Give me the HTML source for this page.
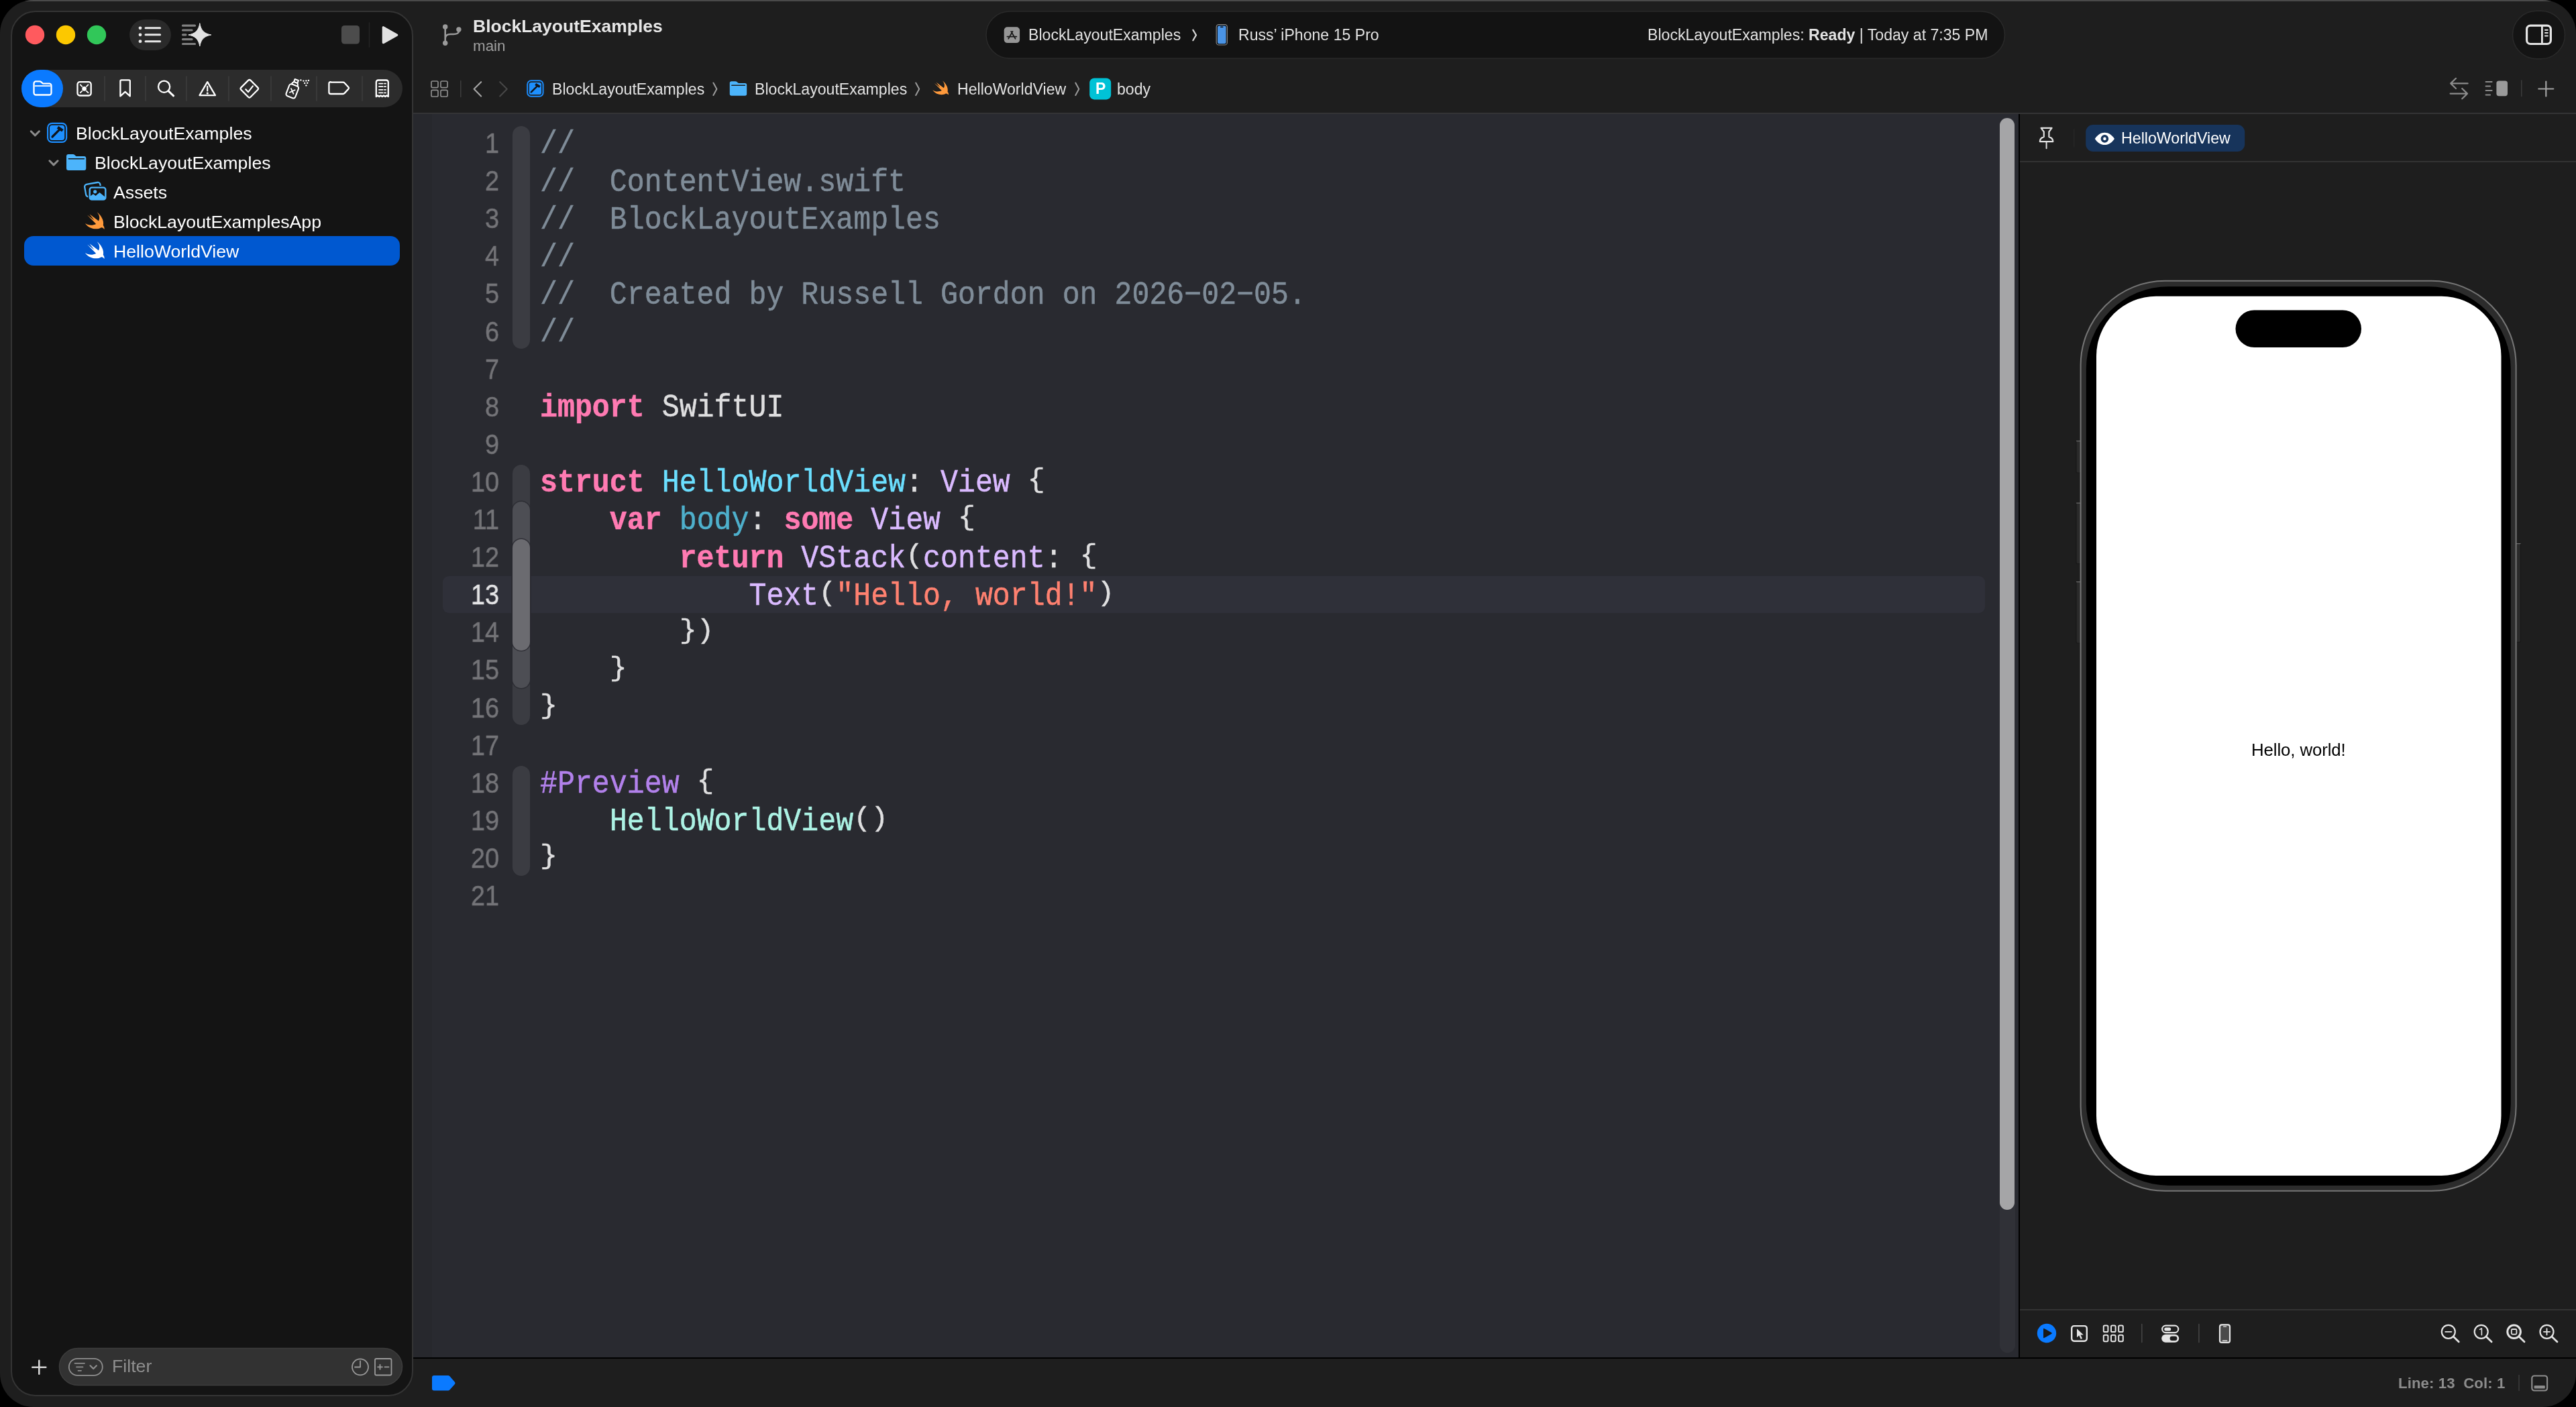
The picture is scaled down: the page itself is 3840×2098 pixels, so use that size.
<!DOCTYPE html>
<html><head><meta charset="utf-8"><title>Xcode</title>
<style>
*{margin:0;padding:0;box-sizing:border-box}
html,body{width:3840px;height:2098px;overflow:hidden;background:#000}
body{position:relative;font-family:"Liberation Sans",sans-serif;color:#fff}
.abs{position:absolute}
#win{position:absolute;left:0;top:0;width:3840px;height:2098px;background:#1e1e1e;border-radius:50px;overflow:hidden}
#topline{position:absolute;left:0;top:0;width:3840px;height:2px;background:#4a4a4a}
#side{position:absolute;left:16px;top:16px;width:600px;height:2066px;background:#141414;border:2px solid #343434;border-radius:37px}
#editor{position:absolute;left:616px;top:170px;width:2393px;height:1855px;background:#292a30}
#gut{position:absolute;left:616px;top:170px;width:28px;height:1855px;background:#27282d}
#hline{position:absolute;left:616px;top:168px;width:3224px;height:2px;background:#343436}
#vdiv{position:absolute;left:3009px;top:170px;width:2px;height:1856px;background:#000}
#canvas{position:absolute;left:3011px;top:170px;width:829px;height:1855px;background:#1e1e1e}
#chline{position:absolute;left:3011px;top:240px;width:829px;height:2px;background:#333}
#cbline{position:absolute;left:3011px;top:1952px;width:829px;height:2px;background:#333}
#bline{position:absolute;left:616px;top:2024px;width:3224px;height:2px;background:#000}
#curline{position:absolute;left:660px;top:859px;width:2299px;height:55px;background:#2f3039;border-radius:9px}
#sbtrack{position:absolute;left:2981px;top:175px;width:23px;height:1842px;background:#303137;border-radius:12px}
#sbthumb{position:absolute;left:2981px;top:176px;width:22px;height:1628px;background:#a5a5a7;border-radius:11px}
.t{position:absolute;white-space:pre;line-height:1;will-change:transform}
.code{font-family:"Liberation Mono",monospace;font-size:43.25px;color:#dfdfe0;transform:scaleY(1.11);transform-origin:0 76.68%;-webkit-text-stroke:.45px}
.ln{position:absolute;white-space:pre;line-height:1;font-size:42px;color:#747478;text-align:right;width:100px;transform-origin:100% 50%;transform:scaleX(0.9);will-change:transform;-webkit-text-stroke:.5px}
.br{display:inline-block;transform:scaleY(.84);transform-origin:50% 3.2%}
.kw{color:#ff7ab2;font-weight:bold}
.cm{color:#7f8c98}
.st{color:#ff8170}
.td{color:#6bdfff}
.od{color:#4eb0cc}
.sc{color:#dabaff}
.pc{color:#acf2e4}
.mc{color:#b281eb}
.rib{position:absolute;left:764px;width:26px;border-radius:13px}
#selrow{position:absolute;left:36px;top:352px;width:560px;height:44px;background:#0058d0;border-radius:14px}
</style></head><body>
<div id="win">
<div id="topline"></div>
<div id="side"></div>
<div id="editor"></div><div id="gut"></div>
<div id="canvas"></div>
<div id="hline"></div><div id="vdiv"></div><div id="chline"></div><div id="cbline"></div><div id="bline"></div>
<div id="sbtrack"></div><div id="sbthumb"></div>
<div id="curline"></div>
<div id="selrow"></div>
<div class="rib" style="top:187.8px;height:332.6px;background:#3b3c42"></div>
<div class="rib" style="top:692.7px;height:388.7px;background:#3b3c42"></div>
<div class="rib" style="top:748.0px;height:278.1px;background:#4d4e54;box-shadow:0 0 0 1.6px rgba(41,42,48,.75)"></div>
<div class="rib" style="top:804.1px;height:165.9px;background:#6b6b70;box-shadow:0 0 0 1.6px rgba(41,42,48,.75)"></div>
<div class="rib" style="top:1141.5px;height:164.3px;background:#3b3c42"></div>
<div class="ln" style="top:193.0px;left:644px">1</div>
<div class="t code" style="left:805.3px;top:195.4px"><span class="cm">//</span></div>
<div class="ln" style="top:249.1px;left:644px">2</div>
<div class="t code" style="left:805.3px;top:251.5px"><span class="cm">//  ContentView.swift</span></div>
<div class="ln" style="top:305.2px;left:644px">3</div>
<div class="t code" style="left:805.3px;top:307.6px"><span class="cm">//  BlockLayoutExamples</span></div>
<div class="ln" style="top:361.3px;left:644px">4</div>
<div class="t code" style="left:805.3px;top:363.7px"><span class="cm">//</span></div>
<div class="ln" style="top:417.4px;left:644px">5</div>
<div class="t code" style="left:805.3px;top:419.8px"><span class="cm">//  Created by Russell Gordon on 2026−02−05.</span></div>
<div class="ln" style="top:473.5px;left:644px">6</div>
<div class="t code" style="left:805.3px;top:475.9px"><span class="cm">//</span></div>
<div class="ln" style="top:529.6px;left:644px">7</div>
<div class="ln" style="top:585.7px;left:644px">8</div>
<div class="t code" style="left:805.3px;top:588.1px"><span class="kw">import</span> SwiftUI</div>
<div class="ln" style="top:641.8px;left:644px">9</div>
<div class="ln" style="top:697.9px;left:644px">10</div>
<div class="t code" style="left:805.3px;top:700.3px"><span class="kw">struct</span> <span class="td">HelloWorldView</span>: <span class="sc">View</span> <span class="br">{</span></div>
<div class="ln" style="top:754.0px;left:644px">11</div>
<div class="t code" style="left:805.3px;top:756.4px">    <span class="kw">var</span> <span class="od">body</span>: <span class="kw">some</span> <span class="sc">View</span> <span class="br">{</span></div>
<div class="ln" style="top:810.1px;left:644px">12</div>
<div class="t code" style="left:805.3px;top:812.5px">        <span class="kw">return</span> <span class="sc">VStack</span><span class="br">(</span><span class="sc">content</span>: <span class="br">{</span></div>
<div class="ln" style="top:866.2px;left:644px;color:#e4e4e6">13</div>
<div class="t code" style="left:805.3px;top:868.6px">            <span class="sc">Text</span><span class="br">(</span><span class="st">"Hello, world!"</span><span class="br">)</span></div>
<div class="ln" style="top:922.3px;left:644px">14</div>
<div class="t code" style="left:805.3px;top:924.7px">        <span class="br">}</span><span class="br">)</span></div>
<div class="ln" style="top:978.4px;left:644px">15</div>
<div class="t code" style="left:805.3px;top:980.8px">    <span class="br">}</span></div>
<div class="ln" style="top:1034.5px;left:644px">16</div>
<div class="t code" style="left:805.3px;top:1036.9px"><span class="br">}</span></div>
<div class="ln" style="top:1090.6px;left:644px">17</div>
<div class="ln" style="top:1146.7px;left:644px">18</div>
<div class="t code" style="left:805.3px;top:1149.1px"><span class="mc">#Preview</span> <span class="br">{</span></div>
<div class="ln" style="top:1202.8px;left:644px">19</div>
<div class="t code" style="left:805.3px;top:1205.2px">    <span class="pc">HelloWorldView</span><span class="br">(</span><span class="br">)</span></div>
<div class="ln" style="top:1258.9px;left:644px">20</div>
<div class="t code" style="left:805.3px;top:1261.3px"><span class="br">}</span></div>
<div class="ln" style="top:1315.0px;left:644px">21</div>
<!-- SIDEBAR ICONS -->
<svg class="abs" style="left:0;top:0" width="640" height="2098" viewBox="0 0 640 2098" fill="none" stroke-linecap="round" stroke-linejoin="round">
<!-- traffic lights -->
<circle cx="52" cy="52" r="14.2" fill="#ff5a5e"/>
<circle cx="98" cy="52" r="14.2" fill="#fcc800"/>
<circle cx="144" cy="52" r="14.2" fill="#31c759"/>
<!-- list pill -->
<rect x="193" y="29" width="62" height="46" rx="23" fill="#2a2a2a"/>
<g fill="#e8e8e8"><circle cx="209" cy="41.800" r="2.400"/><circle cx="209" cy="51.800" r="2.400"/><circle cx="209" cy="61.700" r="2.400"/></g>
<g stroke="#e8e8e8" stroke-width="3"><path d="M217 41.800H238.600M217 51.800H238.600M217 61.700H238.600"/></g>
<!-- sparkle lines -->
<g stroke="#808080" stroke-width="3.2"><path d="M272.5 38.2H290.5M272.5 45H286M272.5 51.8H277M272.5 58.7H286M272.5 65.5H290.5"/></g>
<path d="M297.8 35.0C299.7 45.5 304.3 50.1 314.8 52.0C304.3 53.9 299.7 58.5 297.8 69.0C295.9 58.5 291.3 53.9 280.8 52.0C291.3 50.1 295.9 45.5 297.8 35.0Z" fill="#141414" stroke="#141414" stroke-width="4"/><path d="M297.8 35.0C299.7 45.5 304.3 50.1 314.8 52.0C304.3 53.9 299.7 58.5 297.8 69.0C295.9 58.5 291.3 53.9 280.8 52.0C291.3 50.1 295.9 45.5 297.8 35.0Z" fill="#e2e2e2" stroke="#e2e2e2" stroke-width="1"/>
<!-- stop / play -->
<rect x="509" y="38" width="27" height="27.5" rx="4.5" fill="#4c4c4c"/>
<path d="M550.5 34V70" stroke="#242424" stroke-width="1.6"/>
<path d="M571.5 41V63.5L591.5 52.2Z" fill="#e2e2e2" stroke="#e2e2e2" stroke-width="3.6"/>
<!-- navigator bar -->
<rect x="32" y="104" width="568" height="56" rx="28" fill="#2c2c2c"/>
<rect x="32" y="104" width="62" height="56" rx="28" fill="#0a7aff"/>
<g stroke="#3d3d3d" stroke-width="1.6"><path d="M156 114V150M217 114V150M278 114V150M341 114V150M404 114V150M472 114V150M540 114V150"/></g>
<g stroke="#fff" stroke-width="2.300">
<!-- folder -->
<path d="M53.5 121.4h5.6c1 0 1.7.4 2.4 1l2 1.7c.5.4 1 .6 1.7.6h8.3a3 3 0 0 1 3 3v10.8a3 3 0 0 1-3 3H53.5a3 3 0 0 1-3-3V124.4a3 3 0 0 1 3-3z"/>
<path d="M52.500 128.200H74.500" stroke-width="1.800"/>
<!-- breakpoint-ish square -->
<rect x="115.5" y="122.2" width="20.2" height="20.3" rx="3.5"/>
<path d="M119.8 126.4l2.4 2.4M131.4 126.4l-2.4 2.4M119.8 138.2l2.4-2.4M131.4 138.2l-2.4-2.4" stroke-width="1.900"/>
<circle cx="125.6" cy="132.4" r="3.300" fill="#fff" stroke="none"/>
<!-- bookmark -->
<path d="M181 119.4h11.2a1.6 1.6 0 0 1 1.6 1.6v22.4l-7.2-6.6-7.2 6.6V121a1.6 1.6 0 0 1 1.6-1.600z"/>
<!-- magnifier -->
<circle cx="244.6" cy="129.2" r="8.6"/>
<path d="M251 135.600l7.600 7.200" stroke-width="3"/>
<!-- warning -->
<path d="M309.200 122.200l11.700 20h-23.400z"/>
<path d="M309.200 128.800v6.600" stroke-width="2.200"/>
<circle cx="309.2" cy="139" r="1.6" fill="#fff" stroke="none"/>
<!-- diamond check -->
<rect x="-10" y="-10" width="20" height="20" rx="2.600" transform="translate(371.800 132.200) rotate(45)"/>
<path d="M366.300 133.200l3.800 4 6.800-8.800" stroke-width="2.200"/>
<!-- spray can -->
<g transform="translate(436.300 134.500) rotate(21)" stroke-width="2.100">
<rect x="-7.300" y="-8" width="14.600" height="19" rx="3.200"/>
<path d="M-4.800-8c.2-2 1-3.400 2-4.300h5.600c1 .9 1.800 2.300 2 4.300"/>
<path d="M-2.800-12.500v-4h5.600v4" />
<path d="M-3 -1.400l6 6M3 -1.400l-6 6" stroke-width="1.800"/>
</g>
<g fill="#fff" stroke="none"><circle cx="448.400" cy="119.400" r="1.200"/><circle cx="452.400" cy="120.600" r="1.200"/><circle cx="456.400" cy="120.400" r="1.200"/><circle cx="460" cy="120" r="1.200"/><circle cx="454.200" cy="124" r="1.200"/><circle cx="458.200" cy="123.800" r="1.200"/><circle cx="456.400" cy="127.400" r="1.200"/></g>
<!-- tag -->
<path d="M493 122.600h18.400c.8 0 1.500.3 2 .9l6 6.500a2 2 0 0 1 0 2.600l-6 6.500c-.5.600-1.200.9-2 .9H493a2.600 2.600 0 0 1-2.600-2.600v-12.700a2.600 2.600 0 0 1 2.600-2.600z"/>
<!-- receipt -->
<path d="M560.800 144v-21.500a3 3 0 0 1 3-3h12a3 3 0 0 1 3 3V144l-2.250-1.500-2.250 1.500-2.250-1.500-2.250 1.500-2.250-1.500-2.250 1.500-2.250-1.500z" stroke-width="2.300"/>
<path d="M565 124.600h5.600M573 124.600h2M565 129.200h5.600M573 129.200h2M565 133.800h5.600M573 133.800h2M565 138.400h5.600M573 138.400h2" stroke-width="1.800"/>
</g>
<!-- tree chevrons -->
<g stroke="#8c8c8c" stroke-width="3"><path d="M46.200 195.800l6.100 6.100 6.100-6.100M73.900 239.800l6.100 6.100 6.100-6.100"/></g>
<!-- project icon -->
<g id="proj">
<rect x="71.100" y="183.900" width="28" height="28" rx="6.500" stroke="#1b8dff" stroke-width="2.200"/>
<rect x="74" y="186.800" width="22.200" height="22.200" rx="3.800" fill="#1e90ff"/>
<path d="M78 204l10.800-10.800" stroke="#10141c" stroke-width="3.200"/>
<path d="M86 189.800l7.400 5" stroke="#10141c" stroke-width="4.400" stroke-linecap="butt"/>

</g>
<!-- folder (filled) -->
<g id="fold">
<path d="M99 233a3 3 0 0 1 3-3h6.800c1 0 1.800.4 2.500 1l1.600 1.400c.5.500 1.100.7 1.800.7h10.600a3 3 0 0 1 3 3v15a3 3 0 0 1-3 3H102a3 3 0 0 1-3-3z" fill="#4cb4fb"/>
<path d="M102.400 236.700h23" stroke="#141414" stroke-width="1.500"/>
</g>
<!-- assets -->
<g>
<rect x="127" y="273.300" width="23.500" height="18.500" rx="3.500" transform="rotate(-10 138.700 282.500)" stroke="#4cb4fb" stroke-width="2.300"/>
<rect x="133.700" y="279.600" width="23.600" height="18" rx="3.200" fill="#141414" stroke="#141414" stroke-width="5"/>
<rect x="133.700" y="279.600" width="23.600" height="18" rx="3.200" fill="#141414" stroke="#4cb4fb" stroke-width="2.400"/>
<circle cx="141.700" cy="285.800" r="2.600" fill="#4cb4fb"/>
<path d="M134.600 292.600l4.400-3.400 3.600 2.800 5.800-5 8 6.600v3.600h-21.800z" fill="#4cb4fb" stroke="none"/>
</g>
</svg>
<svg class="abs" style="left:0;top:0" width="640" height="2098" viewBox="0 0 640 2098" fill="none" stroke-linecap="round" stroke-linejoin="round">
<path transform="translate(110 300)" d="M34.5 16.2C40.5 20.500 45.500 29 43.800 36C45 37.500 46 40 45.500 41.900C44.500 40.500 42.500 39 40.500 39.400C36 42.500 24 43 16.900 33C22 36.500 28 36.500 33.200 34L20 20.600L30.500 28.600L23.500 19.200L37 29.500C39.500 25 38 20 34.500 16.200Z" fill="#ff9a3c"/>
<path transform="translate(110 344)" d="M34.5 16.2C40.5 20.500 45.500 29 43.800 36C45 37.500 46 40 45.500 41.900C44.500 40.500 42.500 39 40.500 39.400C36 42.500 24 43 16.900 33C22 36.500 28 36.500 33.200 34L20 20.600L30.500 28.600L23.500 19.200L37 29.500C39.500 25 38 20 34.500 16.200Z" fill="#fff"/>
<!-- bottom bar -->
<path d="M48.300 2038.700h20M58.300 2028.700v20" stroke="#d4d4d4" stroke-width="2.600"/>
<rect x="88.500" y="2010.500" width="511" height="55" rx="27.500" fill="#323232" stroke="#3d3d3d" stroke-width="1.500"/>
<rect x="102.800" y="2025.800" width="50" height="25" rx="12.500" stroke="#8e8e8e" stroke-width="1.800"/>
<path d="M111.500 2032.800h14.500M114 2038.300h9.500M116.500 2043.800h4.500" stroke="#8e8e8e" stroke-width="1.800"/>
<path d="M134.500 2036.300l4.700 4.700 4.700-4.700" stroke="#8e8e8e" stroke-width="2.200"/>
<circle cx="537" cy="2038.300" r="12" stroke="#9a9a9a" stroke-width="1.800"/>
<path d="M537 2029.500v9h-8" stroke="#9a9a9a" stroke-width="1.800"/>
<rect x="559" y="2026" width="24.500" height="24.500" rx="2" stroke="#9a9a9a" stroke-width="1.800"/>
<path d="M563 2038.300h7M566.500 2034.800v7M573.500 2038.300h6" stroke="#9a9a9a" stroke-width="1.800"/>
</svg>
<div class="t" style="left:113px;top:186px;font-size:26.700px">BlockLayoutExamples</div>
<div class="t" style="left:140.800px;top:230px;font-size:26.700px">BlockLayoutExamples</div>
<div class="t" style="left:169.200px;top:274px;font-size:26.700px">Assets</div>
<div class="t" style="left:169.200px;top:318px;font-size:26.700px">BlockLayoutExamplesApp</div>
<div class="t" style="left:169.200px;top:362px;font-size:26.700px">HelloWorldView</div>
<div class="t" style="left:167px;top:2023.600px;font-size:26.700px;color:#8e8e8e">Filter</div>
<!-- TOOLBAR -->
<svg class="abs" style="left:620px;top:0" width="3220" height="170" viewBox="620 0 3220 170" fill="none" stroke-linecap="round" stroke-linejoin="round">
<!-- branch icon -->
<g stroke="#9a9a9a" stroke-width="2.600">
<path d="M663.700 43.500V61M663.700 57.500c0-5 3-6.500 8-6.500h4.500c5 0 7.700-2 7.700-4.200"/>
</g>
<g fill="#9a9a9a"><circle cx="663.700" cy="40" r="3.700"/><circle cx="663.700" cy="64.300" r="3.700"/><circle cx="683.900" cy="44" r="3.700"/></g>
<!-- scheme pill -->
<rect x="1470" y="17" width="1518.500" height="70" rx="35" fill="#131313" stroke="#2a2a2a" stroke-width="1.500"/>
<rect x="1496.700" y="40.300" width="23.400" height="23.800" rx="5" fill="#969696"/>
<g stroke="#1a1a1a" stroke-width="1.700"><path d="M1503.200 57.800l6.400-11M1513.600 57.800l-6.400-11M1501.400 54.600h14"/></g>
<path d="M1778.400 44.600l4.600 7.800-4.600 7.800" stroke="#d8d8d8" stroke-width="2.200"/>
<rect x="1813.200" y="36.600" width="16.200" height="30.400" rx="3.600" fill="#0d0d0d" stroke="#8a8a8a" stroke-width="1.200"/>
<rect x="1815" y="38.400" width="12.600" height="26.800" rx="2.200" fill="#4a94e6"/>
<rect x="1819" y="39.400" width="4.600" height="1.600" rx=".8" fill="#0d0d0d"/>
<!-- right round button -->
<rect x="3745.500" y="16.300" width="78" height="71.400" rx="35.700" fill="#141414" stroke="#2a2a2a" stroke-width="1.500"/>
<rect x="3766.600" y="38.100" width="35.800" height="27.400" rx="5.500" stroke="#e4e4e4" stroke-width="3.200"/>
<path d="M3789.400 38.500V65" stroke="#e4e4e4" stroke-width="2.800"/>
<path d="M3794 44.800h3.800M3794 49.100h3.800M3794 53.400h3.800" stroke="#e4e4e4" stroke-width="2"/>
<!-- editor bar left icons -->
<g stroke="#8e8e8e" stroke-width="1.700">
<rect x="643" y="121" width="10" height="9.600" rx="1.800"/><rect x="657" y="121" width="10" height="9.600" rx="1.800"/>
<rect x="643" y="134.400" width="10" height="9.600" rx="1.800"/><rect x="657" y="134.400" width="10" height="9.600" rx="1.800"/>
</g>
<path d="M686.800 120.500V144.500" stroke="#3c3c3c" stroke-width="1.600"/>
<path d="M717.200 122.200l-10.600 10.600 10.600 10.600" stroke="#a6a6a6" stroke-width="2.100"/>
<path d="M745.200 122.200l10.600 10.600-10.600 10.600" stroke="#474747" stroke-width="2.100"/>
<!-- breadcrumb project icon -->
<rect x="786.200" y="120.300" width="23.400" height="23.400" rx="5.500" stroke="#1b8dff" stroke-width="2"/>
<rect x="788.800" y="122.900" width="18.200" height="18.200" rx="3.200" fill="#1e90ff"/>
<path d="M791.800 137.400l8.800-8.800" stroke="#10141c" stroke-width="2.500"/>
<path d="M798.200 125.400l6.600 4.200" stroke="#10141c" stroke-width="3.600" stroke-linecap="butt"/>
<!-- breadcrumb chevrons -->
<g stroke="#9c9c9c" stroke-width="2"><path d="M1063.400 123.600l5 9.200-5 9.200M1365.200 123.600l5 9.200-5 9.200M1603.300 123.600l5 9.200-5 9.200"/></g>
<!-- breadcrumb folder -->
<path d="M1087.800 123.800a2.600 2.600 0 0 1 2.600-2.600h5.800c.9 0 1.600.3 2.200.9l1.400 1.200c.4.400 1 .6 1.600.6h9.200a2.600 2.600 0 0 1 2.600 2.600v13.600a2.600 2.600 0 0 1-2.600 2.600h-20.200a2.600 2.600 0 0 1-2.600-2.600z" fill="#4cb4fb"/>
<path d="M1090.800 127.200h19.600" stroke="#1e1e1e" stroke-width="1.400"/>
<!-- breadcrumb swift -->
<path transform="translate(1376.200 106.800) scale(.83)" d="M34.5 16.2C40.5 20.500 45.500 29 43.800 36C45 37.500 46 40 45.500 41.900C44.500 40.500 42.500 39 40.500 39.400C36 42.500 24 43 16.900 33C22 36.500 28 36.500 33.200 34L20 20.600L30.500 28.600L23.500 19.200L37 29.500C39.500 25 38 20 34.500 16.200Z" fill="#ff9a3c"/>
<!-- P icon -->
<rect x="1624.200" y="116.400" width="32" height="32" rx="7" fill="#00c2d6"/>
<!-- right icons -->
<g stroke="#8c8c8c" stroke-width="2.200">
<path d="M3678.600 124.400h-25.400M3661 116.800l-7.800 7.600 7.800 7.600M3652.600 139.600h25.400M3670.200 132l7.800 7.600-7.800 7.600"/>
<path d="M3705.600 122h9M3705.600 128.500h6.500M3705.600 135h9M3705.600 141.500h6.500" stroke-width="2"/>
</g>
<rect x="3721.400" y="120.400" width="16.600" height="22.800" rx="3.600" fill="#9a9a9a"/>
<path d="M3758.800 120V143.500" stroke="#3a3a3a" stroke-width="1.600"/>
<path d="M3784.300 132.500h22M3795.300 121.500v22" stroke="#a2a2a2" stroke-width="2.200"/>
</svg>
<div class="t" style="left:705px;top:26px;font-size:26.500px;font-weight:bold;color:#e6e6e6">BlockLayoutExamples</div>
<div class="t" style="left:705px;top:58px;font-size:22.400px;color:#a0a0a0">main</div>
<div class="t" style="left:1533.200px;top:41.200px;font-size:23.100px;color:#e2e2e2">BlockLayoutExamples</div>
<div class="t" style="left:1845.500px;top:41.200px;font-size:23.100px;color:#e2e2e2">Russ’ iPhone 15 Pro</div>
<div class="t" style="left:2455.800px;top:41.200px;font-size:23.100px;color:#e2e2e2">BlockLayoutExamples: <b>Ready</b> | Today at 7:35 PM</div>
<div class="t" style="left:822.500px;top:121.900px;font-size:23.100px;color:#e2e2e2">BlockLayoutExamples</div>
<div class="t" style="left:1124.800px;top:121.900px;font-size:23.100px;color:#e2e2e2">BlockLayoutExamples</div>
<div class="t" style="left:1426.700px;top:121.900px;font-size:23.100px;color:#e2e2e2">HelloWorldView</div>
<div class="t" style="left:1664.700px;top:121.900px;font-size:23.100px;color:#e2e2e2">body</div>
<div class="t" style="left:1632.600px;top:121.400px;font-size:23px;font-weight:bold;color:#fff">P</div>
<!-- CANVAS -->
<svg class="abs" style="left:3011px;top:170px" width="829" height="1928" viewBox="3011 170 829 1928" fill="none" stroke-linecap="round" stroke-linejoin="round">
<!-- pin -->
<g stroke="#e0e0e0" stroke-width="2.200">
<path d="M3042.600 190.900h16l-4.200 5.600v7.400c3.600 1.400 6 4.200 6 7.200h-19.600c0-3 2.400-5.800 6-7.200v-7.400z"/>
<path d="M3050.600 211.200v10" stroke-width="2"/>
</g>
<path d="M3091.800 193V219" stroke="#262626" stroke-width="1.600"/>
<!-- chip -->
<rect x="3109.200" y="186" width="237" height="40" rx="11" fill="#17345b"/>
<path d="M3122.800 206.900c4-6 9-9.200 14.600-9.200s10.600 3.200 14.600 9.200c-4 6-9 9.200-14.600 9.200s-10.600-3.200-14.600-9.200z" fill="#fff"/>
<circle cx="3137.400" cy="206.900" r="5.800" fill="#17345b"/>
<circle cx="3137.400" cy="206.900" r="2.300" fill="#fff"/>
<!-- phone -->
<g>
<g fill="#2a2a2a" stroke="#181818" stroke-width="1.200">
<rect x="3095" y="657" width="8" height="48" rx="2"/>
<rect x="3095" y="749.500" width="8" height="91" rx="2"/>
<rect x="3095" y="867" width="8" height="92" rx="2"/>
<rect x="3749.500" y="810" width="8" height="147.500" rx="2"/>
</g>
<path d="M3095.600 657.600h6M3095.600 750.100h6M3095.600 867.600h6M3751 810.600h6" stroke="#6c6c6c" stroke-width="1.400"/>
<rect x="3101.600" y="418.800" width="649" height="1357" rx="126" fill="#2c2c2c" stroke="#767676" stroke-width="2"/>
<rect x="3109.800" y="427.200" width="633" height="1340.500" rx="123" fill="#000"/>
<rect x="3125" y="441.800" width="603.500" height="1311.200" rx="89" fill="#fff"/>
<rect x="3332.500" y="462.500" width="187.500" height="55.500" rx="27.750" fill="#000"/>
</g>
<!-- bottom toolbar -->
<circle cx="3051" cy="1988" r="14.200" fill="#0a7aff"/>
<path d="M3046.800 1981.600v12.800l11.200-6.400z" fill="#1a1a1a" stroke="#1a1a1a" stroke-width="1.600"/>
<rect x="3088.200" y="1977.100" width="22.600" height="22.600" rx="3.600" stroke="#e4e4e4" stroke-width="2.400"/>
<path d="M3096 1981.200v13l3.200-3 2.600 5.600 2.200-1-2.600-5.400h4.400z" fill="#e4e4e4"/>
<g stroke="#e4e4e4" stroke-width="2">
<rect x="3135.800" y="1976.600" width="6.600" height="9.400" rx="1.600"/><rect x="3147" y="1976.600" width="6.600" height="9.400" rx="1.600"/><rect x="3158.200" y="1976.600" width="6.600" height="9.400" rx="1.600"/>
<rect x="3135.800" y="1990.800" width="6.600" height="9.400" rx="1.600"/><rect x="3147" y="1990.800" width="6.600" height="9.400" rx="1.600"/><rect x="3158.200" y="1990.800" width="6.600" height="9.400" rx="1.600"/>
</g>
<path d="M3192.800 1974.500V2001.500M3277.900 1974.500V2001.500" stroke="#444" stroke-width="1.600"/>
<!-- toggles -->
<rect x="3223.200" y="1976.700" width="24" height="10.400" rx="5.200" stroke="#e4e4e4" stroke-width="2.200"/>
<rect x="3226.200" y="1979.400" width="10" height="5" rx="2.500" fill="#e4e4e4"/>
<rect x="3222.200" y="1989.800" width="26" height="12" rx="6" fill="#e4e4e4"/>
<rect x="3234.600" y="1992.600" width="10.800" height="6.400" rx="3.200" fill="#1e1e1e"/>
<!-- phone icon -->
<rect x="3309" y="1975.300" width="15" height="26.600" rx="3" fill="#4a4a4a" stroke="#e4e4e4" stroke-width="2.200"/>
<path d="M3314.600 1978.100h4M3313.400 1999.200h6.400" stroke="#e4e4e4" stroke-width="1.400"/>
<!-- magnifiers -->
<g stroke="#e4e4e4" stroke-width="2.200">
<circle cx="3649.800" cy="1985.800" r="10"/><path d="M3657.200 1993l8 7.800" stroke-width="2.800"/>
<circle cx="3698.700" cy="1985.800" r="10"/><path d="M3706.100 1993l8 7.800" stroke-width="2.800"/>
<circle cx="3747.600" cy="1985.800" r="9.800" stroke-width="3"/><path d="M3755 1993l8 7.800" stroke-width="2.800"/>
<circle cx="3796.500" cy="1985.800" r="10"/><path d="M3803.900 1993l8 7.800" stroke-width="2.800"/>
<path d="M3645.200 1985.800h9.200" stroke-width="1.800"/>
<path d="M3696.600 1982.400l2.800-1.600v10" stroke-width="1.600"/>
<rect x="3743.800" y="1982" width="7.600" height="7.600" rx="1.500" stroke-width="1.800"/>
<path d="M3791.900 1985.800h9.200M3796.500 1981.200v9.200" stroke-width="1.800"/>
</g>
<!-- status bar -->
<path d="M3755 2050.500V2073.500" stroke="#3a3a3a" stroke-width="1.600"/>
<rect x="3774.300" y="2051.500" width="22.800" height="22" rx="3.500" stroke="#8c8c8c" stroke-width="2.200"/>
<rect x="3777.600" y="2066" width="16.200" height="4.600" rx="1" fill="#8c8c8c"/>
</svg>
<svg class="abs" style="left:640px;top:2040px" width="50" height="40" viewBox="640 2040 50 40"><path d="M647 2051h21c.9 0 1.700.4 2.300 1.100l7.600 8.600a2.400 2.400 0 0 1 0 3.200l-7.600 8.600c-.6.700-1.400 1.100-2.300 1.100h-21a3 3 0 0 1-3-3v-16.600a3 3 0 0 1 3-3z" fill="#0a7aff"/></svg>
<div class="t" style="left:3161.600px;top:195px;font-size:23.200px;color:#fff">HelloWorldView</div>
<div class="t" style="left:3356px;top:1106.400px;font-size:25.800px;color:#000;letter-spacing:-.1px">Hello, world!</div>
<div class="t" style="left:3574.500px;top:2052px;font-size:22.200px;letter-spacing:.1px;font-weight:bold;color:#8c8c8c">Line: 13  Col: 1</div>
</div>
</body></html>
